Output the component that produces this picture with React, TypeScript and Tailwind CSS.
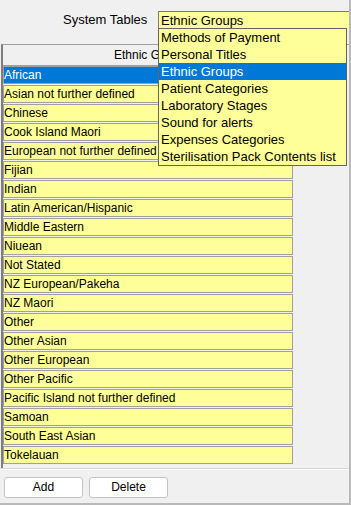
import { useState } from 'react';

const tables = [
  'Methods of Payment',
  'Personal Titles',
  'Ethnic Groups',
  'Patient Categories',
  'Laboratory Stages',
  'Sound for alerts',
  'Expenses Categories',
  'Sterilisation Pack Contents list',
];

const groups = [
  'African',
  'Asian not further defined',
  'Chinese',
  'Cook Island Maori',
  'European not further defined',
  'Fijian',
  'Indian',
  'Latin American/Hispanic',
  'Middle Eastern',
  'Niuean',
  'Not Stated',
  'NZ European/Pakeha',
  'NZ Maori',
  'Other',
  'Other Asian',
  'Other European',
  'Other Pacific',
  'Pacific Island not further defined',
  'Samoan',
  'South East Asian',
  'Tokelauan',
];

export default function App() {
  const [table] = useState('Ethnic Groups');
  const [selected] = useState('African');

  return (
    <div className="w-[351px] h-[505px] bg-[#f0f0f0] border-r-2 border-b-2 border-[#b9b9b9] flex flex-col font-['Liberation_Sans',Arial,sans-serif] text-black overflow-hidden">
      {/* Header */}
      <div className="h-[44px] flex items-start pt-[11px] shrink-0">
        <span className="ml-[63px] w-[97px] text-[13px] leading-[18px]">System Tables</span>
        <div className="relative">
          <div className="w-[191px] h-[18px] bg-[#ffff99] border-t border-l border-[#7a7a7a] pl-[2px] text-[13px] leading-[17px]">
            {table}
          </div>
          {/* open dropdown */}
          <div className="absolute left-0 top-[17px] w-[189px] bg-[#ffff99] border border-[#646464] z-10">
            {tables.map((t) => (
              <div
                key={t}
                className={`h-[17px] pl-[2px] text-[13px] leading-[17px] whitespace-nowrap ${
                  t === table ? 'bg-[#0078d7] text-white' : ''
                }`}
              >
                {t}
              </div>
            ))}
          </div>
        </div>
      </div>

      {/* Grid */}
      <div className="h-[424px] ml-[1px] border-t border-[#a0a0a0] border-l-2 border-l-[#7d7d7d] flex flex-col shrink-0">
        <div className="h-[21px] w-[298px] flex items-center justify-center border-b border-[#a0a0a0] text-[12px]">
          Ethnic Groups
        </div>
        {groups.map((g) => (
          <div key={g} className="h-[19px] pb-[1px]">
            <div
              className={`h-[18px] w-[290px] border border-[#a0a0a0] text-[12px] leading-[16px] whitespace-nowrap ${
                g === selected ? 'bg-[#0078d7] text-white border-[#0078d7]' : 'bg-[#ffff99]'
              }`}
            >
              {g}
            </div>
          </div>
        ))}
      </div>

      {/* Footer */}
      <div className="border-t border-t-[#d8d8d8]">
        <div className="border-t border-white flex gap-[6px] pl-[4px] pt-[7px]">
          <button className="w-[79px] h-[21px] bg-white border border-[#c4c4c4] rounded-[3px] text-[12px] leading-[19px]">
            Add
          </button>
          <button className="w-[79px] h-[21px] bg-white border border-[#c4c4c4] rounded-[3px] text-[12px] leading-[19px]">
            Delete
          </button>
        </div>
      </div>
    </div>
  );
}
